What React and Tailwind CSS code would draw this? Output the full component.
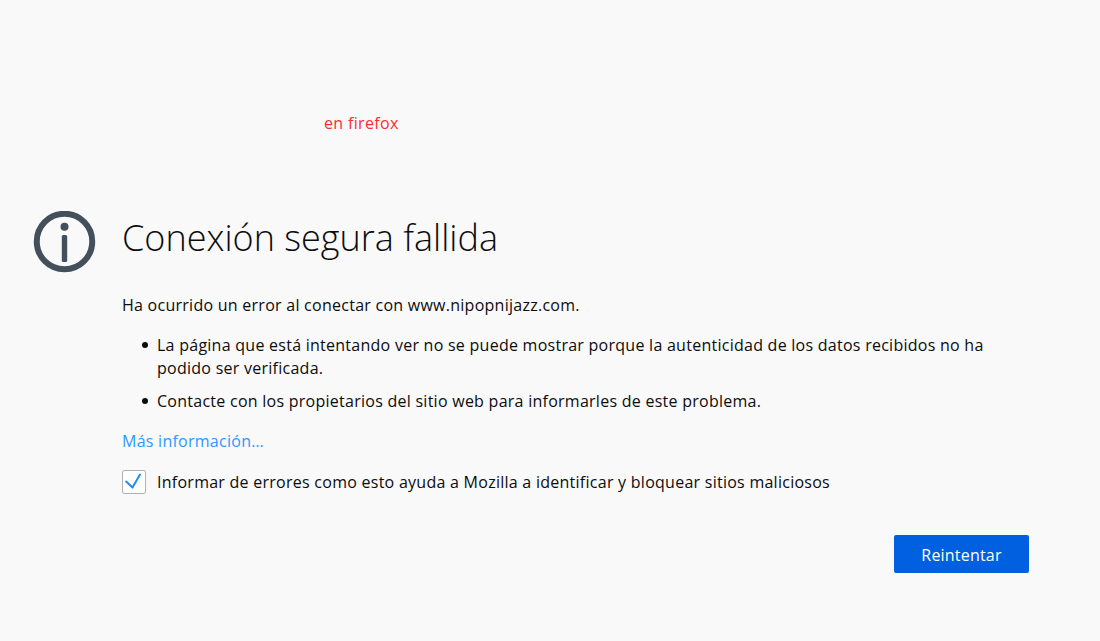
export default function App() {
  return (
    <div className="h-[641px] w-[1100px] overflow-hidden bg-[#f9f9fa] text-[#0c0c0d] font-['Open_Sans','Noto_Sans',sans-serif]">
      <div className="pt-[113px] pl-[324px] text-[16px] leading-[20px] text-[#fa2d2d] tracking-[0.35px]">en firefox</div>
      <div className="mt-[78px] flex pl-[33px] pr-[71px]">
        <svg className="h-[63px] w-[63px] shrink-0" viewBox="0 0 63 63">
          <circle cx="31.5" cy="30.5" r="27.75" fill="none" stroke="#444f5c" strokeWidth="6" />
          <circle cx="31.5" cy="15.8" r="4" fill="#444f5c" />
          <rect x="28.8" y="24" width="5.4" height="27" rx="1.5" fill="#444f5c" />
        </svg>
        <div className="ml-[26px] flex-1">
          <h1 className="text-[36px] leading-[50px] font-light mt-[2px]">Conexión segura fallida</h1>
          <p className="mt-[31px] text-[16px] leading-[23px] tracking-[0.26px]">Ha ocurrido un error al conectar con www.nipopnijazz.com.</p>
          <ul className="mt-[17px] flex flex-col gap-[10px] text-[16px] leading-[23px] tracking-[0.26px]">
            <li className="flex">
              <span className="mt-[8px] ml-[20px] mr-[9px] h-[6px] w-[6px] shrink-0 rounded-full bg-[#0c0c0d]" />
              <span>La página que está intentando ver no se puede mostrar porque la autenticidad de los datos recibidos no ha podido ser verificada.</span>
            </li>
            <li className="flex">
              <span className="mt-[8px] ml-[20px] mr-[9px] h-[6px] w-[6px] shrink-0 rounded-full bg-[#0c0c0d]" />
              <span>Contacte con los propietarios del sitio web para informarles de este problema.</span>
            </li>
          </ul>
          <a className="mt-[17px] block text-[16px] leading-[23px] tracking-[0.26px] text-[#2f97ff]">Más información…</a>
          <div className="mt-[17px] flex items-center">
            <span className="flex h-[24px] w-[24px] shrink-0 items-center justify-center rounded-[2px] border border-[#b1b1b3] bg-white">
              <svg className="h-[18px] w-[18px]" viewBox="0 0 18 18">
                <path d="M1.2 8.5 L7.5 14.5 L15 1.5" fill="none" stroke="#1e8cf0" strokeWidth="2" strokeLinecap="round" strokeLinejoin="round" />
              </svg>
            </span>
            <span className="ml-[11px] text-[16px] leading-[23px] tracking-[0.26px]">Informar de errores como esto ayuda a Mozilla a identificar y bloquear sitios maliciosos</span>
          </div>
          <div className="mt-[41px] flex justify-end">
            <button className="h-[38px] w-[135px] rounded-[2px] bg-[#0060df] pt-[2px] text-[16px] tracking-[0.2px] text-white">Reintentar</button>
          </div>
        </div>
      </div>
    </div>
  );
}
